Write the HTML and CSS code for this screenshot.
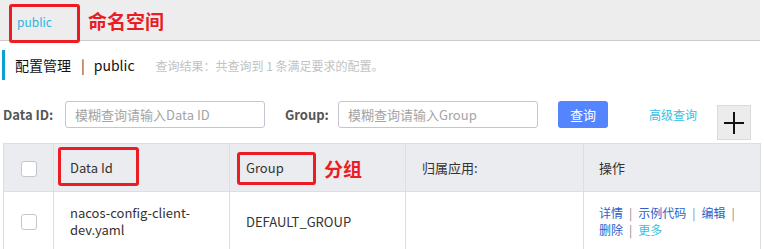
FILE: index.html
```html
<!DOCTYPE html>
<html lang="zh-CN">
<head>
<meta charset="utf-8">
<title>配置管理</title>
<link rel="stylesheet" href="styles.css">
</head>
<body>
<div class="page">
  <header class="ns-bar">
    <a class="ns-link">public</a>
  </header>

  <div class="title-row">
    <span class="title">配置管理</span>
    <span class="title-sep">|</span>
    <span class="title">public</span>
    <span class="summary">查询结果：共查询到 1 条满足要求的配置。</span>
  </div>

  <div class="filter-row">
    <label class="f-label">Data ID:</label>
    <input class="f-input" type="text" placeholder="模糊查询请输入Data ID">
    <label class="f-label f-label-group">Group:</label>
    <input class="f-input" type="text" placeholder="模糊查询请输入Group">
    <button class="btn-primary">查询</button>
    <a class="adv-link">高级查询</a>
    <button class="btn-plus" aria-label="新建">
      <svg width="22" height="22" viewBox="0 0 22 22"><line x1="1" y1="11" x2="21" y2="11" stroke="#111" stroke-width="2"/><line x1="11" y1="0" x2="11" y2="22" stroke="#111" stroke-width="2"/></svg>
    </button>
  </div>

  <table class="cfg-table">
    <colgroup>
      <col class="c-check"><col class="c-id"><col class="c-group"><col class="c-app"><col class="c-op">
    </colgroup>
    <thead>
      <tr>
        <th class="cell-check"><span class="checkbox"></span></th>
        <th>Data Id</th>
        <th>Group</th>
        <th>归属应用:</th>
        <th class="th-op">操作</th>
      </tr>
    </thead>
    <tbody>
      <tr>
        <td class="cell-check"><span class="checkbox"></span></td>
        <td>nacos-config-client-dev.yaml</td>
        <td>DEFAULT_GROUP</td>
        <td></td>
        <td class="td-op">
          <div class="ops">
            <span class="op"><a>详情</a><i class="op-sep">|</i></span>
            <span class="op"><a>示例代码</a><i class="op-sep">|</i></span>
            <span class="op"><a>编辑</a><i class="op-sep">|</i></span>
            <span class="op"><a>删除</a><i class="op-sep">|</i></span>
            <span class="op"><a class="more">更多</a></span>
          </div>
        </td>
      </tr>
    </tbody>
  </table>

  <div class="mark mark-ns"></div>
  <div class="mark-label mark-label-ns">命名空间</div>
  <div class="mark mark-id"></div>
  <div class="mark mark-group"></div>
  <div class="mark-label mark-label-group">分组</div>
</div>
</body>
</html>
```

FILE: styles.css
```css
* { box-sizing: border-box; }
html, body {
  margin: 0;
  padding: 0;
  background: #fff;
}
body {
  font-family: "Noto Sans CJK SC", "Noto Sans", sans-serif;
  color: #333;
  font-size: 13px;
}
.page {
  position: relative;
  width: 760px;
}
.ns-bar {
  height: 41px;
  background: #ededed;
  border-bottom: 1px solid #cccccc;
  padding: 12px 0 0 17px;
}
.ns-link {
  font-size: 12px;
  line-height: 17px;
  color: #2fb4dd;
}
.title-row {
  margin: 9px 0 0 2px;
  height: 30px;
  border-left: 3px solid #0aa0d2;
  padding-left: 10px;
  display: flex;
  align-items: center;
}
.title {
  font-size: 14px;
  color: #111;
  line-height: 20px;
}
.title-sep {
  font-size: 14px;
  color: #333;
  margin: 0 9px 0 10px;
}
.summary {
  margin-left: 21px;
  font-size: 12px;
  color: #c2c2c2;
}
.filter-row {
  display: flex;
  align-items: flex-start;
  margin-top: 21px;
  padding-left: 3px;
  height: 39px;
}
.f-label {
  flex-shrink: 0;
  white-space: nowrap;
  font-weight: bold;
  font-size: 13px;
  color: #555;
  line-height: 27px;
  margin-right: 12px;
  width: 50px;
}
.f-label-group {
  margin-left: 20px;
  margin-right: 12px;
  width: 41px;
}
.f-input {
  flex-shrink: 0;
  width: 200px;
  height: 27px;
  border: 1px solid #c4c6cf;
  border-radius: 3px;
  padding: 0 9px;
  font-family: inherit;
  font-size: 13px;
  color: #333;
  outline: none;
}
.f-input::placeholder { color: #a4a4a4; }
.btn-primary {
  flex-shrink: 0;
  margin-left: 20px;
  width: 50px;
  height: 27px;
  border: none;
  border-radius: 3px;
  background: #5584ff;
  color: #fff;
  font-family: inherit;
  font-size: 13px;
  padding: 0;
}
.adv-link {
  flex-shrink: 0;
  margin-left: 41px;
  font-size: 12px;
  line-height: 27px;
  color: #35bfe4;
}
.btn-plus {
  flex-shrink: 0;
  margin: 4px 0 0 20px;
  width: 34px;
  height: 35px;
  background: #ececec;
  border: 1px solid #dadada;
  padding: 0;
  display: flex;
  align-items: center;
  justify-content: center;
}
.cfg-table {
  margin-left: 3px;
  width: 757px;
  border-collapse: collapse;
  table-layout: fixed;
  margin-top: 3px;
}
.c-check { width: 50px; }
.c-id { width: 176px; }
.c-group { width: 176px; }
.c-app { width: 178px; }
.c-op { width: 177px; }
.cfg-table th, .cfg-table td {
  border: 1px solid #dcdee3;
  text-align: left;
  vertical-align: middle;
  padding: 0 16px;
  font-size: 13px;
  line-height: 17px;
  color: #333;
}
.cfg-table th {
  background: #ebecf0;
  font-weight: normal;
  height: 48px;
}
.cfg-table td {
  padding-top: 12px;
  padding-bottom: 12px;
}
.cfg-table .cell-check {
  padding: 0;
  text-align: center;
}
.cfg-table .th-op, .cfg-table .td-op { padding-left: 15px; padding-right: 8px; }
.checkbox {
  display: inline-block;
  width: 16px;
  height: 16px;
  border: 1px solid #c4c6cf;
  border-radius: 3px;
  background: #fff;
  vertical-align: middle;
}
.ops {
  display: flex;
  flex-wrap: wrap;
  font-size: 12px;
  line-height: 17px;
}
.op { white-space: nowrap; }
.op a { color: #2c5fc8; }
.op a.more { color: #35bfe4; }
.op-sep {
  font-style: normal;
  color: #888;
  margin: 0 6px;
}
.mark {
  position: absolute;
  border: 3px solid #ec1c24;
  border-radius: 3px;
}
.mark-ns { left: 9px; top: 4px; width: 71px; height: 39px; }
.mark-id { left: 58px; top: 147px; width: 81px; height: 39px; }
.mark-group { left: 237px; top: 152px; width: 79px; height: 33px; }
.mark-label {
  position: absolute;
  color: #ec1c24;
  font-weight: bold;
  line-height: 1;
}
.mark-label-ns { left: 88px; top: 11px; font-size: 19px; }
.mark-label-group { left: 324px; top: 159px; font-size: 19px; }
```
